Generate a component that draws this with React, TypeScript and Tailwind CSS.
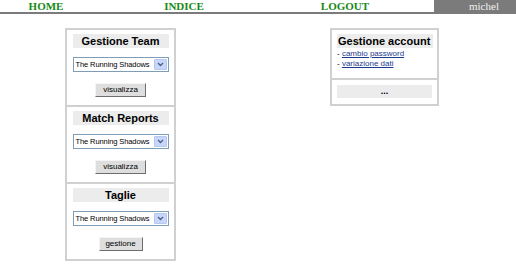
import React from "react";

const teams = ["Gestione Team", "Match Reports", "Taglie"];

function Select() {
  return (
    <div className="flex h-[15px] w-[96px] border border-[#7f9db9] bg-white">
      <span className="flex-1 overflow-hidden whitespace-nowrap pl-[2px] text-[7.5px] leading-[13px] tracking-[-0.1px] text-black">
        The Running Shadows
      </span>
      <span className="m-px flex w-[13px] items-center justify-center rounded-[1px] border border-[#b6c8f1] bg-[#c7d6fa]">
        <svg width="7" height="5" viewBox="0 0 7 5">
          <path d="M1 1 L3.5 3.5 L6 1" fill="none" stroke="#4d6185" strokeWidth="1.4" />
        </svg>
      </span>
    </div>
  );
}

function Button({ label, w }: { label: string; w: string }) {
  return (
    <div
      className={`${w} flex h-[14px] items-center justify-center border border-t-[#f4f4f4] border-l-[#f4f4f4] border-r-[#6e6e6e] border-b-[#6e6e6e] bg-[#dedede] text-[8px] leading-none text-black`}
    >
      {label}
    </div>
  );
}

export default function App() {
  return (
    <div className="relative h-[266px] w-[516px] overflow-hidden bg-white font-['Liberation_Sans',Arial,sans-serif]">
      {/* top menu */}
      <div className="flex h-[12px] font-['Liberation_Serif','Times_New_Roman',serif] text-[11px] leading-[12px]">
        <div className="w-[92px] text-center font-bold text-[#178a17]">HOME</div>
        <div className="w-[184px] text-center font-bold text-[#178a17]">INDICE</div>
        <div className="w-[138px] text-center font-bold text-[#178a17]">LOGOUT</div>
        <div className="w-[20px]" />
        <div className="flex-1 bg-[#7b7b7b] pl-[35px] text-[#f0f0f0]">michel</div>
      </div>
      <div className="h-[2px] bg-[#7b7b7b]" />

      <div className="mt-[14px] flex">
        {/* left panel */}
        <div className="ml-[65px] w-[111px] border-2 border-[#d0d0d0]">
          {teams.map((t, i) => (
            <div
              key={t}
              className={`flex flex-col items-center px-[5px] pt-[4px] pb-[8px] ${i < 2 ? "border-b-2 border-[#d0d0d0]" : ""}`}
            >
              <div className="h-[14px] w-[96px] bg-[#ececec] text-center text-[11px] font-bold leading-[14px] text-black">
                {t}
              </div>
              <div className="mt-[9px]">
                <Select />
              </div>
              <div className="mt-[11px]">
                <Button label={i === 2 ? "gestione" : "visualizza"} w={i === 2 ? "w-[44px]" : "w-[51px]"} />
              </div>
            </div>
          ))}
        </div>

        {/* right panel */}
        <div className="ml-[154px] w-[109px] self-start border-2 border-[#d0d0d0]">
          <div className="border-b-2 border-[#d0d0d0] px-[5px] pt-[4px] pb-[9px]">
            <div className="h-[14px] w-[96px] whitespace-nowrap bg-[#ececec] pl-px text-[11px] font-bold leading-[14px] text-black">
              Gestione account
            </div>
            <div className="mt-[1px] text-[8px] leading-[10px] text-black">
              - <span className="text-[#1d3b8c] underline">cambio password</span>
            </div>
            <div className="text-[8px] leading-[10px] text-black">
              - <span className="text-[#1d3b8c] underline">variazione dati</span>
            </div>
          </div>
          <div className="px-[5px] pt-[5px] pb-[6px]">
            <div className="h-[13px] w-[95px] bg-[#ececec] text-center text-[9px] font-bold leading-[13px] text-black">
              ...
            </div>
          </div>
        </div>
      </div>
    </div>
  );
}
